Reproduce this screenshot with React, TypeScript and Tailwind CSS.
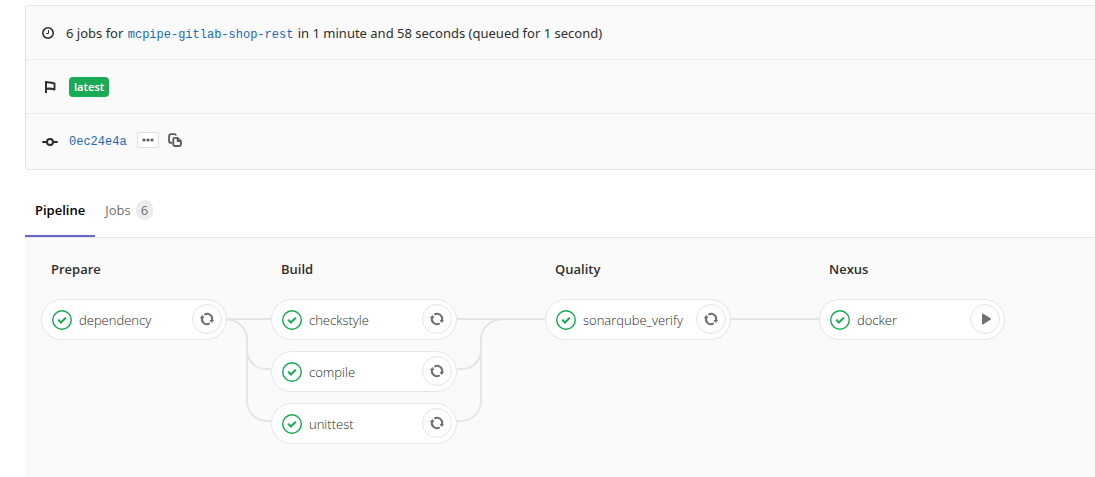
import type { ReactNode } from "react";

type Action = "retry" | "play";
type Job = { name: string; action: Action };
type Stage = { title: string; jobs: Job[] };

const stages: Stage[] = [
  { title: "Prepare", jobs: [{ name: "dependency", action: "retry" }] },
  {
    title: "Build",
    jobs: [
      { name: "checkstyle", action: "retry" },
      { name: "compile", action: "retry" },
      { name: "unittest", action: "retry" },
    ],
  },
  { title: "Quality", jobs: [{ name: "sonarqube_verify", action: "retry" }] },
  { title: "Nexus", jobs: [{ name: "docker", action: "play" }] },
];

function ClockIcon() {
  return (
    <svg className="size-3 shrink-0" viewBox="0 0 12 12" fill="none" stroke="currentColor" aria-hidden="true">
      <circle cx="6" cy="6" r="5.2" strokeWidth="1.6" />
      <path d="M6.5 3v3.500H4" strokeWidth="1" />
    </svg>
  );
}

function FlagIcon() {
  return (
    <svg className="size-4 shrink-0" viewBox="0 0 16 16" fill="none" stroke="currentColor" aria-hidden="true">
      <path d="M4 2v12" strokeWidth="2" />
      <path d="M4 3.200l4.200.3 4.300 1v6l-4.300-1L4 9.800" strokeWidth="1.900" strokeLinejoin="round" />
    </svg>
  );
}

function CommitIcon() {
  return (
    <svg className="size-4 shrink-0" viewBox="0 0 16 16" fill="none" stroke="currentColor" strokeWidth="2" aria-hidden="true">
      <circle cx="8" cy="8" r="3" />
      <path d="M1 8h4M11 8h4" strokeLinecap="round" />
    </svg>
  );
}

function CopyIcon() {
  return (
    <svg className="size-4" viewBox="0 0 16 16" fill="none" stroke="currentColor" strokeWidth="1.900" aria-hidden="true">
      <path d="M5 10.800H4A1.900 1.900 0 0 1 2.100 8.900V4A1.900 1.900 0 0 1 4 2.100h3.200A1.900 1.900 0 0 1 9 3.600" />
      <path d="M7.800 5.900h2.700l3.400 3.300v3.300a1.500 1.500 0 0 1-1.500 1.500H7.800a1.500 1.500 0 0 1-1.500-1.500V7.400a1.500 1.500 0 0 1 1.500-1.500z" />
      <path d="M10.200 6v3.500h3.600z" fill="currentColor" strokeWidth="1" />
    </svg>
  );
}

function SuccessIcon() {
  return (
    <svg className="size-5 shrink-0 text-[#1aaa55]" viewBox="0 0 14 14" fill="currentColor" role="img" aria-label="passed">
      <path fillRule="evenodd" d="M0 7a7 7 0 1 1 14 0A7 7 0 0 1 0 7zM13 7A6 6 0 1 0 1 7a6 6 0 0 0 12 0z" />
      <path d="M6.278 7.697L5.045 6.464a.296.296 0 0 0-.42-.002l-.613.614a.298.298 0 0 0 .002.42l1.910 1.909a.5.5 0 0 0 .703.005l.265-.265L9.997 6.040a.291.291 0 0 0-.009-.408l-.614-.614a.290.290 0 0 0-.408-.009L6.278 7.697z" />
    </svg>
  );
}

function RetryIcon() {
  return (
    <svg className="size-4" viewBox="0 0 16 16" fill="none" stroke="currentColor" strokeWidth="2" aria-hidden="true">
      <path d="M5.300 3.800A5 5 0 0 1 13 9.200" />
      <path d="M10.700 12.200A5 5 0 0 1 3 6.800" />
      <path d="M10.600 9.100l4.700-.2-2.900 3.200z" fill="currentColor" stroke="none" />
      <path d="M5.400 6.900l-4.700.2 2.900-3.200z" fill="currentColor" stroke="none" />
    </svg>
  );
}

function PlayIcon() {
  return (
    <svg className="size-4" viewBox="0 0 16 16" fill="currentColor" aria-hidden="true">
      <path d="M5 3c0-.5.400-.7.800-.5l8 5.100c.3.200.3.600 0 .8l-8 5.100c-.4.200-.8 0-.8-.5z" />
    </svg>
  );
}

function InfoRow({ children, last }: { children: ReactNode; last?: boolean }) {
  return (
    <div
      className={
        last
          ? "flex h-[55px] items-center px-4"
          : "flex h-[54px] items-center border-b border-[#eeeeee] px-4"
      }
    >
      {children}
    </div>
  );
}

function JobPill({ job }: { job: Job }) {
  return (
    <li className="flex h-[41px] items-center rounded-full border border-[#e5e5e5] bg-white pr-1 pl-[10px]">
      <SuccessIcon />
      <a href={`#${job.name}`} className="ml-[7px] grow font-light text-[#1f1f1f]">
        {job.name}
      </a>
      <button
        type="button"
        aria-label={`${job.action} ${job.name}`}
        className="mb-px flex size-[30px] shrink-0 items-center justify-center rounded-full border border-[#e5e5e5] bg-white text-[#707070]"
      >
        {job.action === "retry" ? <RetryIcon /> : <PlayIcon />}
      </button>
    </li>
  );
}

function Connector({ index }: { index: number }) {
  if (index === 0) {
    return (
      <svg className="mt-[61px] h-[144px] w-[44px] shrink-0" viewBox="0 0 44 144" fill="none" stroke="#e5e5e5" strokeWidth="2" aria-hidden="true">
        <path d="M0 20H44M0 20.500A20 20 0 0 1 20 40.500V102A20 20 0 0 0 40 122H44M20 40V51A19 19 0 0 0 39 70H44" />
      </svg>
    );
  }
  return (
    <svg className="mt-[61px] h-[144px] w-[88px] shrink-0" viewBox="0 0 88 144" fill="none" stroke="#e5e5e5" strokeWidth="2" aria-hidden="true">
      <path d="M0 20H88" />
      {index === 1 && (
        <path d="M0 122H4A20 20 0 0 0 24 102V40.500A20 20 0 0 1 44 20.500M0 70H5A19 19 0 0 0 24 51" />
      )}
    </svg>
  );
}

export default function App() {
  return (
    <main className="overflow-hidden bg-white pt-[5px] pl-[25px] font-['Open_Sans','Noto_Sans',sans-serif] text-[13px] leading-5 text-[#2e2e2e]">
      <section className="rounded-l border border-r-0 border-[#e5e5e5] bg-[#fafafa]">
        <InfoRow>
          <ClockIcon />
          <p className="ml-3 font-['Noto_Sans',sans-serif] whitespace-nowrap">
            6 jobs for{" "}
            <a href="#ref" className="mx-px font-['Liberation_Mono',monospace] text-xs text-[#1b69b6]">
              mcpipe-gitlab-shop-rest
            </a>{" "}
            in 1 minute and 58 seconds (queued for 1 second)
          </p>
        </InfoRow>
        <InfoRow>
          <FlagIcon />
          <span className="ml-[11px] rounded bg-[#1aaa55] px-[5px] font-['Noto_Sans',sans-serif] text-[11px] leading-5 font-semibold text-white">
            latest
          </span>
        </InfoRow>
        <InfoRow last>
          <CommitIcon />
          <a href="#commit" className="ml-[11px] font-['Liberation_Mono',monospace] text-xs text-[#1b69b6]">
            0ec24e4a
          </a>
          <button
            type="button"
            aria-label="Toggle commit description"
            className="mb-[3px] ml-[10px] flex h-4 w-[22px] items-center justify-center rounded-[3px] border border-[#e0e0e0] bg-white text-[#5c5c5c]"
          >
            <svg className="h-1 w-3" viewBox="0 0 12 4" fill="currentColor" aria-hidden="true">
              <circle cx="2" cy="2" r="1.600" />
              <circle cx="6" cy="2" r="1.600" />
              <circle cx="10" cy="2" r="1.600" />
            </svg>
          </button>
          <button type="button" aria-label="Copy commit SHA" className="mb-[3px] ml-2 text-[#5c5c5c]">
            <CopyIcon />
          </button>
        </InfoRow>
      </section>

      <nav className="mt-[14px] flex items-start border-b border-[#e5e5e5]">
        <a
          href="#pipeline"
          aria-current="page"
          className="flex h-[53px] items-center border-b-2 border-[#6666c4] px-[10px] font-semibold text-black"
        >
          Pipeline
        </a>
        <a href="#jobs" className="flex h-[53px] items-center border-b-2 border-transparent px-[10px] text-[#707070]">
          Jobs
          <span className="ml-[5px] rounded-full bg-[#ececec] px-[5px]">6</span>
        </a>
      </nav>

      <section className="flex bg-[#fafafa] pr-4 pb-[34px] pl-4">
        {stages.map((stage, index) => (
          <div key={stage.title} className="flex shrink-0 items-start">
            {index > 0 && <Connector index={index - 1} />}
            <div className="w-[186px] pt-[21px]">
              <h2 className="mb-5 pl-[10px] font-semibold">{stage.title}</h2>
              <ul className="flex flex-col gap-[11px]">
                {stage.jobs.map((job) => (
                  <JobPill key={job.name} job={job} />
                ))}
              </ul>
            </div>
          </div>
        ))}
      </section>
    </main>
  );
}
